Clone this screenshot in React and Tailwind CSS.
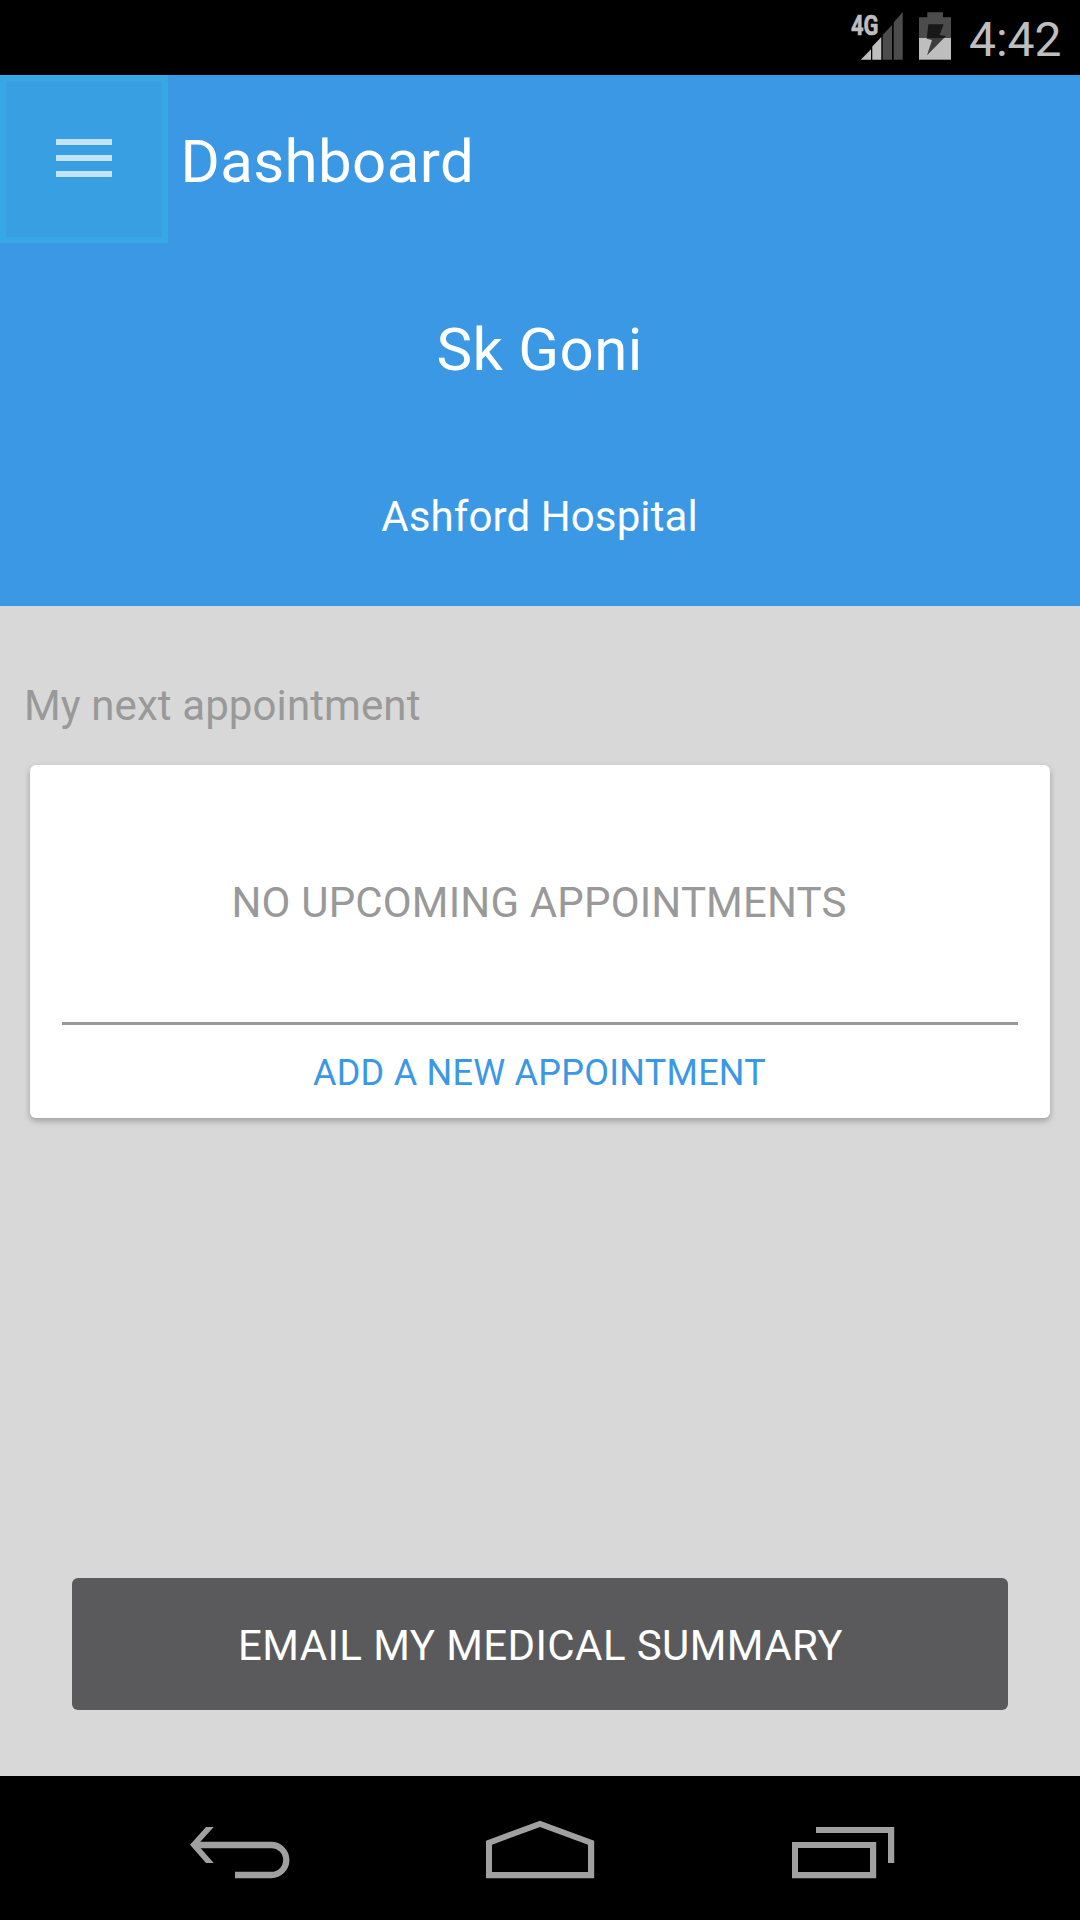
function StatusIcons() {
  return (
    <svg className="ml-[850px] mt-[11px] h-[50px] w-[103px] shrink-0" viewBox="850 11 103 50">
      <text x="851" y="34.7" textLength="27.5" lengthAdjust="spacingAndGlyphs" fontSize="27" fontWeight="700" fontFamily="Roboto, sans-serif" fill="#bebebe" stroke="#bebebe" strokeWidth=".7">4G</text>
      <path fill="#bebebe" d="M860.7 59.7 871 49.3V59.7ZM872.3 46.5 881.3 37V59.7H872.3Z" />
      <path fill="#4c4c4c" d="M882.7 35 892 25V59.7H882.7ZM893.7 22.5 902.7 12V59.7H893.7Z" />
      <path fill="#4c4c4c" d="M927.3 12.3H943V17.3H951V38H919V17.3H927.3Z" />
      <path fill="#bebebe" d="M919 38H951V59.7H919Z" />
      <path fill="#000" fillOpacity=".68" d="M928.3 24.3H943.7L939.7 35L946 36L927 55.3L932 40L926.7 38.7Z" />
    </svg>
  );
}

export default function App() {
  return (
    <div className="flex h-[1920px] w-[1080px] flex-col bg-[#d8d8d8] font-[Roboto,sans-serif] whitespace-nowrap">
      <div className="flex h-[75px] shrink-0 bg-black">
        <StatusIcons />
        <span className="mt-[19px] ml-4 text-[48px] leading-[41px] text-[#bebebe]">4:42</span>
      </div>

      <header className="flex h-[531px] shrink-0 flex-col bg-[#3b98e5] text-white">
        <div className="flex h-[168px]">
          <button className="flex size-[168px] flex-col items-center gap-[10px] border-6 border-[#35a8e5] bg-[#389fe3] pt-[58px]">
            <span className="h-[6px] w-[56px] bg-[#c3e3f7]" />
            <span className="h-[6px] w-[56px] bg-[#c3e3f7]" />
            <span className="h-[6px] w-[56px] bg-[#c3e3f7]" />
          </button>
          <h1 className="mt-[51px] ml-[12.5px] text-[60px] leading-[71px] tracking-[0.38px]">Dashboard</h1>
        </div>
        <p className="mt-[71px] pr-px text-center text-[60px] leading-[71px] tracking-[0.35px]">Sk Goni</p>
        <p className="mt-[107px] pr-px text-center text-[42px] leading-[49px] tracking-[0.1px]">Ashford Hospital</p>
      </header>

      <main className="flex flex-1 flex-col">
        <h2 className="mt-[75px] ml-[24px] text-[42px] leading-[49px] tracking-[0.1px] text-[#999]">My next appointment</h2>
        <section className="mx-[30px] mt-[35px] flex h-[353px] flex-col rounded-[6px] bg-white px-8 text-center shadow-[0_3px_6px_rgba(0,0,0,0.27)]">
          <p className="mt-[113px] pr-[2px] text-[42px] leading-[49px] tracking-[0.17px] text-[#999]">NO UPCOMING APPOINTMENTS</p>
          <div className="mt-[95px] h-[3px] bg-[#999]" />
          <button className="mt-[27px] pr-px text-[36px] leading-[42px] tracking-[0.25px] text-[#3b98e5]">ADD A NEW APPOINTMENT</button>
        </section>
        <button className="mx-[72px] mt-auto mb-[66px] h-[132px] rounded-[6px] bg-[#5a5a5c] pt-[2px] pl-px text-[42px] leading-[49px] tracking-[0.41px] text-white">EMAIL MY MEDICAL SUMMARY</button>
      </main>

      <nav className="flex h-[144px] shrink-0 bg-black px-[180px] pt-[42px]">
        <svg className="h-[64px] w-[720px]" viewBox="180 1818 720 64" fill="#a0a0a0">
          <path d="M190 1844.8 206 1827H213.7L197.7 1844.8L213.7 1863H206Z" />
          <path d="M195 1845H271.3A15 15 0 0 1 271.3 1875H235" fill="none" stroke="#a0a0a0" strokeWidth="6.3" />
          <path fillRule="evenodd" d="M486 1840.7 540 1820.7 594.2 1840.7V1878.2H486ZM492 1844.7V1872H588V1844.7L540 1827Z" />
          <path fillRule="evenodd" d="M792 1842H876.2V1878.2H792ZM798 1848V1872H870V1848Z" />
          <path d="M816 1827H894.2V1863H888V1833H816Z" />
        </svg>
      </nav>
    </div>
  );
}
